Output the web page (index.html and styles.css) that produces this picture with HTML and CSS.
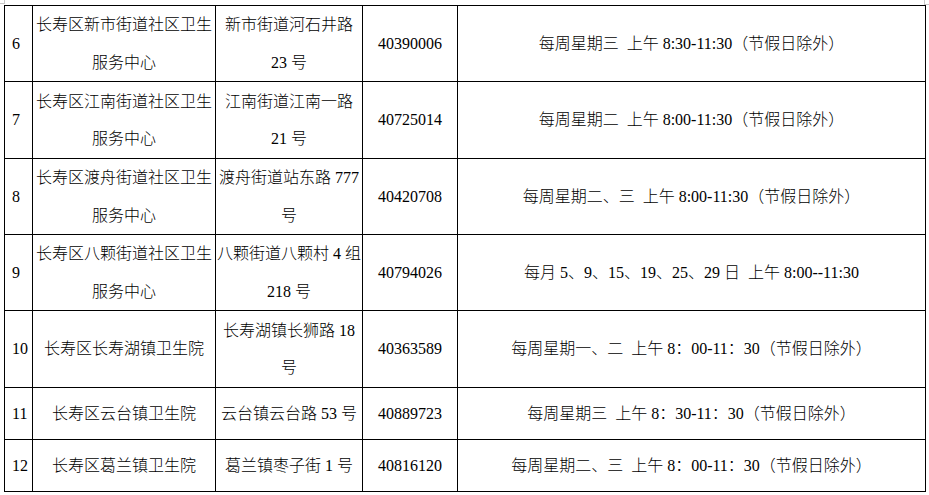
FILE: index.html
```html
<!DOCTYPE html>
<html lang="zh-CN">
<head>
<meta charset="utf-8">
<title>长寿区社区卫生服务机构</title>
<link rel="stylesheet" href="styles.css">
</head>
<body>
<span class="mark mark-left"></span>
<span class="mark mark-right"></span>
<table class="sched">
  <colgroup>
    <col class="c-no">
    <col class="c-name">
    <col class="c-addr">
    <col class="c-tel">
    <col class="c-time">
  </colgroup>
  <tbody>
    <tr class="tall">
      <td class="no">6</td>
      <td>长寿区新市街道社区卫生<br>服务中心</td>
      <td>新市街道河石井路<br>23 号</td>
      <td>40390006</td>
      <td>每周星期三&ensp;上午 8:30-11:30（节假日除外）</td>
    </tr>
    <tr class="tall2">
      <td class="no">7</td>
      <td>长寿区江南街道社区卫生<br>服务中心</td>
      <td>江南街道江南一路<br>21 号</td>
      <td>40725014</td>
      <td>每周星期二&ensp;上午 8:00-11:30（节假日除外）</td>
    </tr>
    <tr class="tall">
      <td class="no">8</td>
      <td>长寿区渡舟街道社区卫生<br>服务中心</td>
      <td>渡舟街道站东路 777<br>号</td>
      <td>40420708</td>
      <td>每周星期二、三&ensp;上午 8:00-11:30（节假日除外）</td>
    </tr>
    <tr class="tall">
      <td class="no">9</td>
      <td>长寿区八颗街道社区卫生<br>服务中心</td>
      <td>八颗街道八颗村 4 组<br>218 号</td>
      <td>40794026</td>
      <td>每月 5、9、15、19、25、29 日&ensp;上午 8:00--11:30</td>
    </tr>
    <tr class="tall2">
      <td class="no">10</td>
      <td>长寿区长寿湖镇卫生院</td>
      <td>长寿湖镇长狮路 18<br>号</td>
      <td>40363589</td>
      <td>每周星期一、二&ensp;上午 8：00-11：30（节假日除外）</td>
    </tr>
    <tr class="short">
      <td class="no">11</td>
      <td>长寿区云台镇卫生院</td>
      <td>云台镇云台路 53 号</td>
      <td>40889723</td>
      <td>每周星期三&ensp;上午 8：30-11：30（节假日除外）</td>
    </tr>
    <tr class="short">
      <td class="no">12</td>
      <td>长寿区葛兰镇卫生院</td>
      <td>葛兰镇枣子街 1 号</td>
      <td>40816120</td>
      <td>每周星期二、三&ensp;上午 8：00-11：30（节假日除外）</td>
    </tr>
  </tbody>
</table>
</body>
</html>
```
FILE: styles.css
```css
html, body {
  margin: 0;
  background: #ffffff;
}
body {
  position: relative;
  padding: 5px 0 0 4px;
  font-family: "Liberation Serif", "Noto Sans CJK SC", serif;
  font-size: 16px;
  font-weight: 300;
  color: #000;
}
.mark {
  position: absolute;
  top: 0;
  width: 4px;
  height: 4px;
  border-color: #c8c8c8;
  border-style: solid;
  border-width: 0;
}
.mark-left {
  left: 0;
  border-right-width: 1px;
  border-bottom-width: 1px;
  height: 3px;
}
.mark-right {
  left: 924px;
  border-left-width: 1px;
  border-bottom-width: 1px;
}
.sched {
  border-collapse: collapse;
  table-layout: fixed;
  width: 921px;
}
.c-no { width: 28px; }
.c-name { width: 183px; }
.c-addr { width: 147px; }
.c-tel { width: 95px; }
.c-time { width: 468px; }
.sched td {
  border: 1px solid #000;
  padding: 0 1px;
  line-height: 37.5px;
  text-align: center;
  vertical-align: middle;
  white-space: nowrap;
  overflow: hidden;
}
.sched td.no {
  text-align: left;
  padding-left: 7px;
}
.tall td { height: 75px; }
.tall2 td { height: 76px; }
.short td { height: 51px; }
```
